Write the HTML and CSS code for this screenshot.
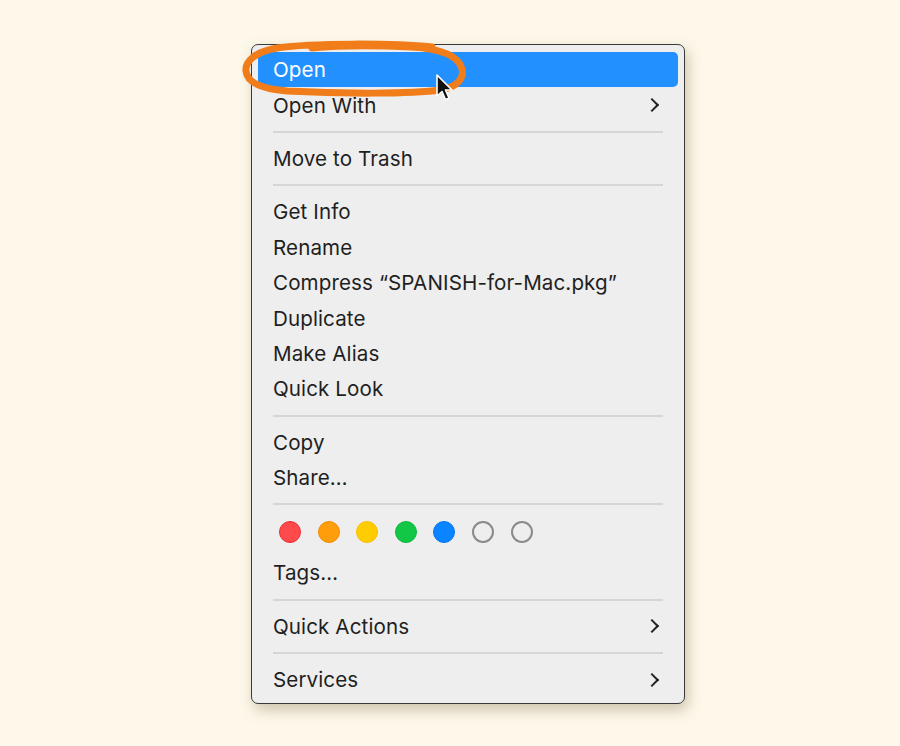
FILE: index.html
```html
<!DOCTYPE html>
<html lang="en">
<head>
    <meta charset="UTF-8">
    <title>Context Menu</title>
    <link rel="stylesheet" href="styles.css">
</head>
<body>
    <div class="stage">
        <div class="menu">
            <div class="item active">Open</div>
            <div class="item">Open With <span class="chevron"></span></div>
            <div class="sep"></div>
            <div class="item">Move to Trash</div>
            <div class="sep"></div>
            <div class="item">Get Info</div>
            <div class="item">Rename</div>
            <div class="item">Compress “SPANISH-for-Mac.pkg”</div>
            <div class="item">Duplicate</div>
            <div class="item">Make Alias</div>
            <div class="item">Quick Look</div>
            <div class="sep"></div>
            <div class="item">Copy</div>
            <div class="item">Share…</div>
            <div class="sep"></div>
            <div class="tags">
                <span class="dot red"></span>
                <span class="dot orange"></span>
                <span class="dot yellow"></span>
                <span class="dot green"></span>
                <span class="dot blue"></span>
                <span class="dot empty"></span>
                <span class="dot empty"></span>
            </div>
            <div class="item">Tags…</div>
            <div class="sep"></div>
            <div class="item">Quick Actions <span class="chevron"></span></div>
            <div class="sep"></div>
            <div class="item">Services <span class="chevron"></span></div>

            <!-- hand drawn circle round "Open" -->
            <svg class="scribble" width="240" height="70" viewBox="0 0 240 70">
                <path d="M190 8 C150 4 70 4 35 9 C12 13 3 23 4 32 C5 44 20 50 45 52 C100 55 170 55 198 51 C217 48 222 38 220 30 C217 18 203 10 170 8 C130 6 90 7 70 9"
                      fill="none" stroke="#f07d1a" stroke-width="7" stroke-linecap="round"/>
            </svg>

            <!-- mouse pointer -->
            <svg class="pointer" width="22" height="30" viewBox="0 0 22 30">
                <path d="M2 2 L2 23 L7 18.5 L10.5 26.5 L14 25 L10.5 17 L17 17 Z"
                      fill="#111" stroke="#fff" stroke-width="1.6" stroke-linejoin="round"/>
            </svg>
        </div>
    </div>
</body>
</html>
```

FILE: styles.css
```css
html, body {
    margin: 0;
    padding: 0;
    height: 100%;
    overflow: hidden;
}

body {
    background-color: #fdf8ea;
    font-family: Inter, 'Noto Sans', sans-serif;
    color: #1f1f1f;
}

.stage {
    padding: 44px 0 0 251px;
}

.menu {
    position: relative;
    width: 420px;
    padding: 7px 6px 6px;
    background-color: #eeeeee;
    border: 1px solid #3a3a3a;
    border-radius: 7px;
    box-shadow: 3px 6px 14px rgba(120, 100, 60, 0.35);
}

.item {
    display: flex;
    align-items: center;
    justify-content: space-between;
    height: 35.4px;
    padding: 0 21px 0 15px;
    font-size: 20.6px;
    letter-spacing: 0.1px;
    border-radius: 5px;
}

.item.active {
    background-color: #2291ff;
    color: white;
}

.chevron {
    width: 8px;
    height: 8px;
    border-top: 2.4px solid #222;
    border-right: 2.4px solid #222;
    transform: rotate(45deg);
    margin-right: 0;
}

.sep {
    height: 18px;
    display: flex;
    align-items: center;
    margin: 0 15px;
}

.sep::before {
    content: '';
    flex: 1;
    height: 2px;
    background-color: #d6d6d6;
}

.tags {
    display: flex;
    gap: 16.6px;
    height: 42px;
    padding: 8px 0 0 21px;
    box-sizing: border-box;
}

.dot {
    width: 22px;
    height: 22px;
    border-radius: 50%;
    box-sizing: border-box;
    border: 1.5px solid transparent;
}

.red { background-color: #ff4a4d; border-color: #f02a2e; }
.orange { background-color: #ff9d0a; border-color: #f28c00; }
.yellow { background-color: #ffcc00; border-color: #f5c000; }
.green { background-color: #12c746; border-color: #0cb83c; }
.blue { background-color: #0a84ff; border-color: #0676ee; }
.empty { background-color: transparent; border: 2px solid #8a8a8a; }

/* overlays */
.scribble {
    position: absolute;
    left: -10px;
    top: -6px;
}

.pointer {
    position: absolute;
    left: 183px;
    top: 28px;
}
```
